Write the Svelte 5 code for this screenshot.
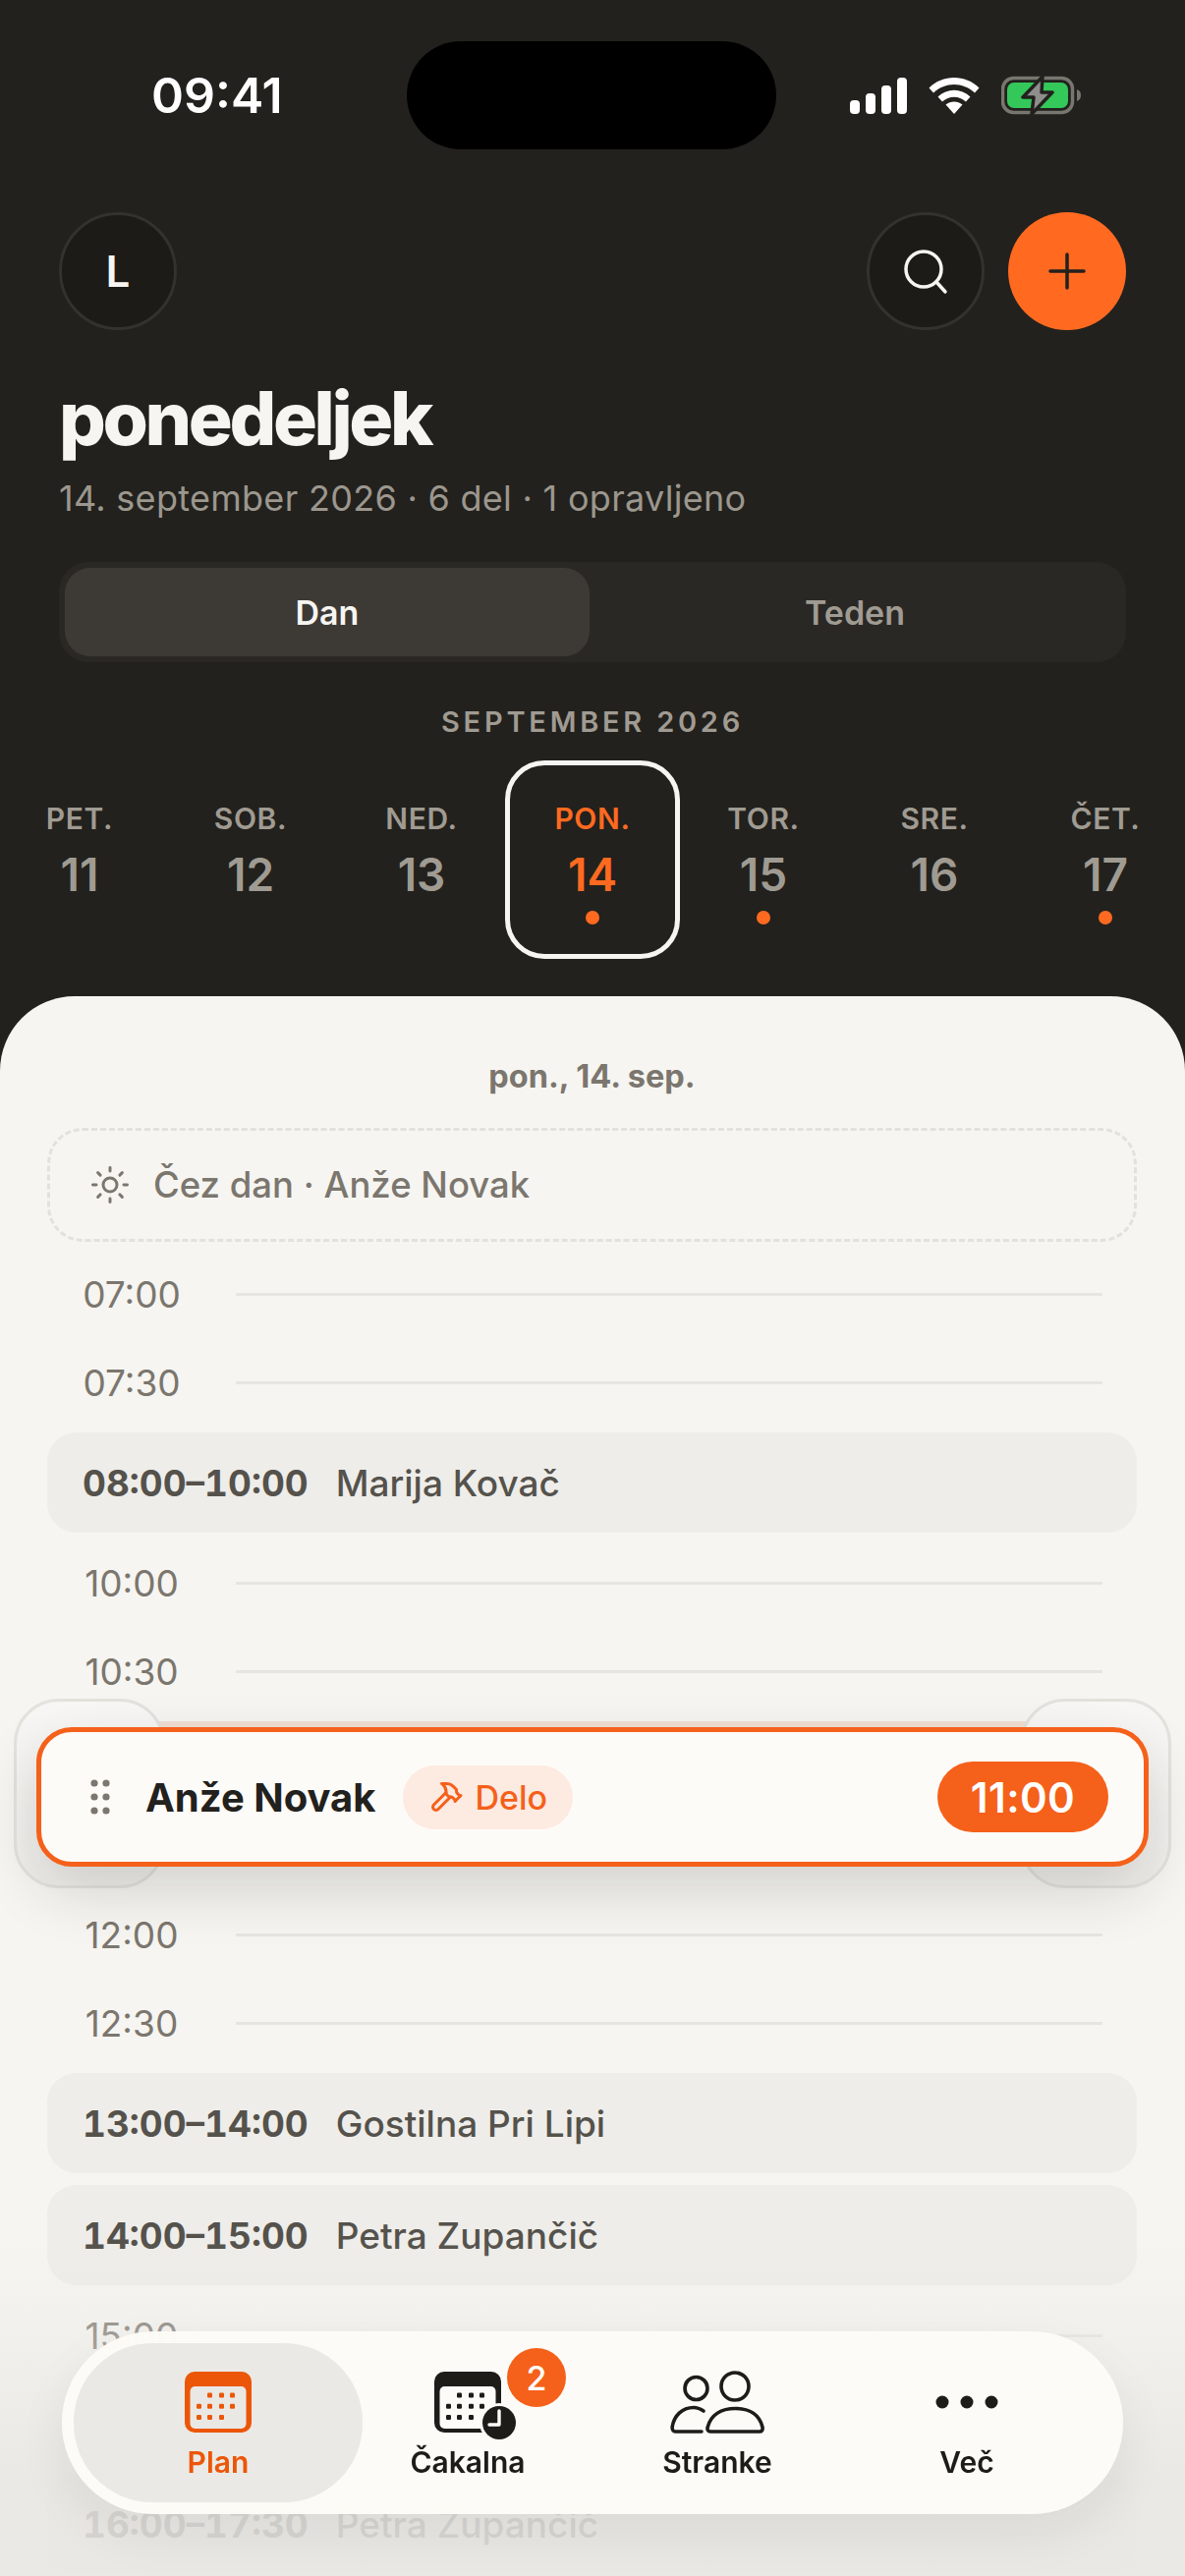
<script>
  const days = [
    { label: "PET.", num: 11, dot: false },
    { label: "SOB.", num: 12, dot: false },
    { label: "NED.", num: 13, dot: false },
    { label: "PON.", num: 14, dot: true, active: true },
    { label: "TOR.", num: 15, dot: true },
    { label: "SRE.", num: 16, dot: false },
    { label: "ČET.", num: 17, dot: true },
  ];
  const dotCols = [7, 18, 30, 41];
  const dotRows = [
    [1, 2, 3],
    [0, 1, 2, 3],
    [0, 1, 2],
  ];
</script>

{#snippet calGrid(fill)}
  {#each dotRows as cols, r}
    {#each cols as c}
      <rect x={dotCols[c] + 6} y={r * 11.2 + 22.5} width="5" height="5" rx="1.2" {fill} />
    {/each}
  {/each}
{/snippet}

{#snippet slot(time)}
  <div class="slot">
    <span class="slot-time">{time}</span>
    <span class="slot-line"></span>
  </div>
{/snippet}

{#snippet event(time, name)}
  <div class="event">
    <b>{time}</b>
    <span>{name}</span>
  </div>
{/snippet}

<main class="screen">
  <header class="top">
    <div class="status">
      <span class="clock">09:41</span>
      <div class="island"></div>
      <div class="status-icons">
        <svg width="58" height="37" viewBox="0 0 58 37" fill="#fff">
          <rect x="0" y="23" width="10" height="14" rx="4" />
          <rect x="16" y="16" width="10" height="21" rx="4" />
          <rect x="32" y="8" width="10" height="29" rx="4" />
          <rect x="48" y="0" width="10" height="37" rx="4" />
        </svg>
        <svg width="52" height="37" viewBox="0 0 52 37" fill="#fff">
          <path d="M0.5 10.5 C14 -3.5 38 -3.5 51.5 10.5 L47 15.5 C35 4 17 4 5 15.5 Z" />
          <path d="M9.5 19.5 C19 10.5 33 10.5 42.5 19.5 L38 24.5 C31 18 21 18 14 24.5 Z" />
          <path d="M17.5 27.5 C22.5 23.5 29.5 23.5 34.5 27.5 L26 37 Z" />
        </svg>
        <svg width="82" height="40" viewBox="0 0 82 40">
          <rect x="1.5" y="2.5" width="71" height="35" rx="11" fill="none" stroke="#77766f" stroke-width="3.5" />
          <rect x="6" y="7" width="62" height="26" rx="7" fill="#34c759" />
          <path d="M77 14 C80 15 81 17 81 20 C81 23 80 25 77 26 Z" fill="#77766f" />
          <path d="M42 1 L22 22 H33 L31 39 L52 17 H41 Z" fill="#8e8e8c" stroke="#22211d" stroke-width="3.5" stroke-linejoin="round" />
        </svg>
      </div>
    </div>

    <div class="actions">
      <div class="round">L</div>
      <div class="actions-right">
        <div class="round">
          <svg width="48" height="48" viewBox="0 0 48 48" fill="none" stroke="#f6f5f1" stroke-width="3.5" stroke-linecap="round">
            <circle cx="22" cy="22" r="18" />
            <path d="M35 35 L44 45" />
          </svg>
        </div>
        <div class="round add">
          <svg width="38" height="38" viewBox="0 0 38 38" fill="none" stroke="#22211d" stroke-width="3.5" stroke-linecap="round">
            <path d="M19 2 V36 M2 19 H36" />
          </svg>
        </div>
      </div>
    </div>

    <h1>ponedeljek</h1>
    <p class="sub">14. september 2026 · 6 del · 1 opravljeno</p>

    <div class="segment">
      <span class="seg on">Dan</span>
      <span class="seg">Teden</span>
    </div>

    <div class="month">SEPTEMBER 2026</div>

    <div class="week">
      {#each days as d}
        <div class="day" class:active={d.active}>
          <span class="day-label">{d.label}</span>
          <span class="day-num">{d.num}</span>
          <span class="day-dot" class:show={d.dot}></span>
        </div>
      {/each}
    </div>
  </header>

  <section class="sheet">
    <div class="date">pon., 14. sep.</div>
    <div class="allday">
      <svg width="42" height="42" viewBox="0 0 24 24" fill="none" stroke="#7b766e" stroke-width="1.7" stroke-linecap="round" stroke-linejoin="round">
        <circle cx="12" cy="12" r="4" />
        <path d="M12 2v2M12 20v2M4.93 4.93l1.41 1.41M17.66 17.66l1.41 1.41M2 12h2M20 12h2M6.34 17.66l-1.41 1.41M19.07 4.93l-1.41 1.41" />
      </svg>
      <span>Čez dan · Anže Novak</span>
    </div>

    {@render slot("07:00")}
    {@render slot("07:30")}
    {@render event("08:00–10:00", "Marija Kovač")}
    {@render slot("10:00")}
    {@render slot("10:30")}
    <div class="ghost"></div>
    {@render slot("12:00")}
    {@render slot("12:30")}
    {@render event("13:00–14:00", "Gostilna Pri Lipi")}
    {@render event("14:00–15:00", "Petra Zupančič")}
    {@render slot("15:00")}
    {@render slot("15:30")}
    {@render event("16:00–17:30", "Petra Zupančič")}
  </section>

  <div class="handle left"></div>
  <div class="handle right"></div>
  <div class="drag">
    <svg class="grip" width="20" height="36" viewBox="0 0 20 36" fill="#7b766e">
      <circle cx="4" cy="4" r="3.6" /><circle cx="16" cy="4" r="3.6" />
      <circle cx="4" cy="18" r="3.6" /><circle cx="16" cy="18" r="3.6" />
      <circle cx="4" cy="32" r="3.6" /><circle cx="16" cy="32" r="3.6" />
    </svg>
    <span class="drag-name">Anže Novak</span>
    <span class="chip">
      <svg width="36" height="36" viewBox="0 0 24 24" fill="none" stroke="#f5601a" stroke-width="2" stroke-linecap="round" stroke-linejoin="round">
        <path d="m15 12-8.373 8.373a1 1 0 1 1-3-3L12 9" />
        <path d="m18 15 4-4" />
        <path d="m21.5 11.5-1.914-1.914A2 2 0 0 1 19 8.172V7l-2.26-2.26a6 6 0 0 0-4.202-1.756L9 2.96l.92.82A6.18 6.18 0 0 1 12 8.4V10l2 2h1.172a2 2 0 0 1 1.414.586L18.5 14.5" />
      </svg>
      Delo
    </span>
    <span class="drag-time">11:00</span>
  </div>

  <div class="fade"></div>

  <nav class="tabs">
    <div class="tab current">
      <svg width="70" height="64" viewBox="0 0 70 64">
        <rect x="1" y="1" width="68" height="62" rx="10" fill="#ec5608" />
        <rect x="6.5" y="16" width="57" height="43" rx="5" fill="#e9e8e4" />
        {@render calGrid("#ec5608")}
      </svg>
      <span>Plan</span>
    </div>
    <div class="tab">
      <span class="tab-badge">2</span>
      <svg class="wait" width="90" height="72" viewBox="0 0 90 72">
        <rect x="1" y="1" width="68" height="62" rx="10" fill="#1d1c18" />
        <rect x="6.5" y="16" width="57" height="43" rx="5" fill="#fcfbf7" />
        {@render calGrid("#1d1c18")}
        <circle cx="67" cy="53" r="20" fill="#fcfbf7" />
        <circle cx="67" cy="53" r="17" fill="#1d1c18" />
        <path d="M67 41 V55 H57" fill="none" stroke="#fcfbf7" stroke-width="3.4" stroke-linecap="round" stroke-linejoin="round" />
      </svg>
      <span>Čakalna</span>
    </div>
    <div class="tab">
      <svg width="96" height="64" viewBox="0 0 96 64" fill="none" stroke="#1d1c18" stroke-width="3.6" stroke-linecap="round">
        <circle cx="26.5" cy="18" r="11.5" />
        <circle cx="66" cy="16" r="14" />
        <path d="M34 41 C30 38.5 27 37.5 24 37.5 C12 37.5 4 46 2.2 57 C1.8 60 3 62 5.5 62 H32" />
        <path d="M41 62 C38.5 62 37.5 60 38.2 57.5 C41.5 45 52 38.5 66.5 38.5 C81 38.5 91 45 94 57.5 C94.5 60 93.5 62 91 62 Z" />
      </svg>
      <span>Stranke</span>
    </div>
    <div class="tab">
      <svg width="64" height="64" viewBox="0 0 64 64" fill="#1d1c18">
        <circle cx="7" cy="32" r="6.5" /><circle cx="32" cy="32" r="6.5" /><circle cx="57" cy="32" r="6.5" />
      </svg>
      <span>Več</span>
    </div>
  </nav>
</main>

<style>
  :global(body) {
    margin: 0;
    background: #22211d;
  }

  .screen {
    position: relative;
    width: 1206px;
    height: 2622px;
    overflow: hidden;
    background: #22211d;
    font-family: Inter, "Noto Sans", sans-serif;
  }

  .top {
    height: 1014px;
    padding: 42px 60px 0;
    box-sizing: border-box;
  }

  .status {
    display: flex;
    align-items: center;
    height: 110px;
    margin: 0 -60px;
    padding: 0 0 0 154px;
  }

  .clock {
    width: 260px;
    color: #fff;
    font-size: 50px;
    font-weight: 600;
  }

  .island {
    width: 376px;
    height: 110px;
    border-radius: 55px;
    background: #000;
  }

  .status-icons {
    display: flex;
    align-items: center;
    gap: 22px;
    margin-left: 75px;
  }

  .actions {
    display: flex;
    justify-content: space-between;
    margin-top: 64px;
  }

  .actions-right {
    display: flex;
    gap: 24px;
  }

  .round {
    display: flex;
    align-items: center;
    justify-content: center;
    width: 120px;
    height: 120px;
    box-sizing: border-box;
    border: 3px solid #33322e;
    border-radius: 50%;
    background: #1c1b18;
    color: #f6f5f1;
    font-size: 44px;
    font-weight: 600;
  }

  .add {
    border: 0;
    background: #ff6a20;
  }

  h1 {
    margin: 46px 0 0;
    color: #f6f5f1;
    font-size: 75px;
    font-weight: 800;
    line-height: 88px;
    letter-spacing: -0.045em;
  }

  .sub {
    margin: 15px 0 0;
    color: #9c978e;
    font-size: 36px;
    line-height: 44px;
    letter-spacing: 0.008em;
  }

  .segment {
    display: grid;
    grid-template-columns: 534px 1fr;
    height: 102px;
    box-sizing: border-box;
    margin-top: 43px;
    padding: 6px;
    border-radius: 30px;
    background: #2a2825;
  }

  .seg {
    display: flex;
    align-items: center;
    justify-content: center;
    border-radius: 26px;
    color: #a09b92;
    font-size: 34px;
    font-weight: 600;
  }

  .on {
    background: #3d3a36;
    color: #f6f5f1;
  }

  .month {
    margin-top: 43px;
    color: #a09b92;
    font-size: 29px;
    font-weight: 600;
    line-height: 36px;
    letter-spacing: 0.13em;
    text-align: center;
  }

  .week {
    display: grid;
    grid-template-columns: repeat(7, 174px);
    justify-content: center;
    margin: 21px -60px 0;
  }

  .day {
    display: flex;
    flex-direction: column;
    align-items: center;
    justify-self: center;
    width: 178px;
    height: 202px;
    box-sizing: border-box;
    padding-top: 36px;
    border: 5px solid transparent;
    border-radius: 40px;
    color: #a09b92;
  }

  .active {
    border-color: #f6f5f1;
    color: #ff6a20;
  }

  .day-label {
    font-size: 30px;
    font-weight: 600;
    line-height: 36px;
    letter-spacing: 0.02em;
  }

  .day-num {
    margin-top: 12px;
    font-size: 46px;
    font-weight: 600;
    line-height: 54px;
  }

  .day-dot {
    width: 14px;
    height: 14px;
    margin-top: 10px;
    border-radius: 50%;
  }

  .show {
    background: #ff6a20;
  }

  .sheet {
    display: flex;
    flex-direction: column;
    height: 1608px;
    box-sizing: border-box;
    padding: 62px 49px 0 48px;
    border-radius: 76px 76px 0 0;
    background: #f6f5f1;
  }

  .date {
    color: #7b766e;
    font-size: 32.5px;
    font-weight: 700;
    line-height: 40px;
    text-align: center;
  }

  .allday {
    display: flex;
    flex: none;
    align-items: center;
    gap: 23px;
    height: 116px;
    box-sizing: border-box;
    margin-top: 32px;
    padding-left: 40px;
    border: 3px dashed #e2e1dc;
    border-radius: 36px;
    color: #7b766e;
    font-size: 36.5px;
    font-weight: 500;
  }

  .slot {
    display: flex;
    flex: none;
    align-items: center;
    height: 90px;
    margin-right: 35px;
    margin-left: 25px;
  }

  .allday + .slot {
    margin-top: 8px;
  }

  .slot-time {
    width: 122px;
    color: #7b766e;
    font-size: 37px;
    text-align: center;
  }

  .slot-line {
    flex: 1;
    height: 3px;
    margin-left: 45px;
    background: #e6e5e0;
  }

  .event {
    display: flex;
    flex: none;
    align-items: center;
    gap: 28px;
    height: 102px;
    box-sizing: border-box;
    margin: 6px 0;
    padding-left: 36px;
    border-radius: 30px;
    background: #eeede9;
    color: #55524c;
    font-size: 37px;
    font-weight: 500;
  }

  .event b {
    font-weight: 700;
    font-variant-numeric: tabular-nums;
  }

  .ghost {
    flex: none;
    height: 50px;
    margin: 6px 0 122px;
    background: #f2dfd3;
  }

  .handle {
    position: absolute;
    top: 1729px;
    width: 154px;
    height: 193px;
    box-sizing: border-box;
    border: 3px solid #e3e2dd;
    border-radius: 46px;
    background: linear-gradient(#f8f7f5, #efeeea);
  }

  .left {
    left: 14px;
  }

  .right {
    right: 14px;
  }

  .drag {
    position: absolute;
    top: 1758px;
    left: 37px;
    display: flex;
    align-items: center;
    width: 1132px;
    height: 142px;
    box-sizing: border-box;
    padding: 0 36px 0 50px;
    border: 5px solid #f5601a;
    border-radius: 36px;
    background: #fdfbf8;
    box-shadow: 0 24px 60px rgba(34, 33, 29, 0.16);
  }

  .grip {
    flex: none;
  }

  .drag-name {
    margin-left: 36px;
    color: #22211d;
    font-size: 40px;
    font-weight: 700;
  }

  .chip {
    display: flex;
    align-items: center;
    gap: 12px;
    height: 65px;
    margin-left: 27px;
    padding: 0 26px;
    border-radius: 33px;
    background: #fdeae0;
    color: #f5601a;
    font-size: 34px;
    font-weight: 500;
  }

  .drag-time {
    display: flex;
    align-items: center;
    justify-content: center;
    width: 174px;
    height: 72px;
    margin-left: auto;
    border-radius: 36px;
    background: #f5601a;
    color: #fff;
    font-size: 42px;
    font-weight: 600;
    letter-spacing: 0.01em;
  }

  .fade {
    position: absolute;
    right: 0;
    bottom: 0;
    left: 0;
    height: 340px;
    background: linear-gradient(rgba(232, 231, 227, 0), rgba(232, 231, 227, 0.88) 70%);
  }

  .tabs {
    position: absolute;
    top: 2373px;
    left: 63px;
    display: flex;
    width: 1080px;
    height: 186px;
    box-sizing: border-box;
    padding: 12px;
    border-radius: 93px;
    background: rgba(252, 251, 247, 0.97);
    box-shadow: 0 20px 50px rgba(34, 33, 29, 0.07);
    backdrop-filter: blur(14px);
  }

  .tab {
    position: relative;
    display: flex;
    flex-direction: column;
    align-items: center;
    width: 254px;
    padding-top: 28px;
    box-sizing: border-box;
    color: #1d1c18;
    font-size: 30px;
    font-weight: 600;
  }

  .tab svg {
    height: 64px;
  }

  .tab span:last-child {
    margin-top: 11px;
    line-height: 36px;
  }

  .current {
    width: 294px;
    margin-right: -20px;
    border-radius: 80px;
    background: rgba(233, 232, 228, 0.96);
    color: #ec5608;
  }

  .tab svg.wait {
    height: 72px;
    margin-bottom: -8px;
    margin-left: 20px;
  }

  .tab-badge {
    position: absolute;
    top: 5px;
    left: 167px;
    display: flex;
    align-items: center;
    justify-content: center;
    width: 60px;
    height: 60px;
    border-radius: 50%;
    background: #f5601a;
    color: #fff;
    font-size: 34px;
    font-weight: 500;
  }
</style>
